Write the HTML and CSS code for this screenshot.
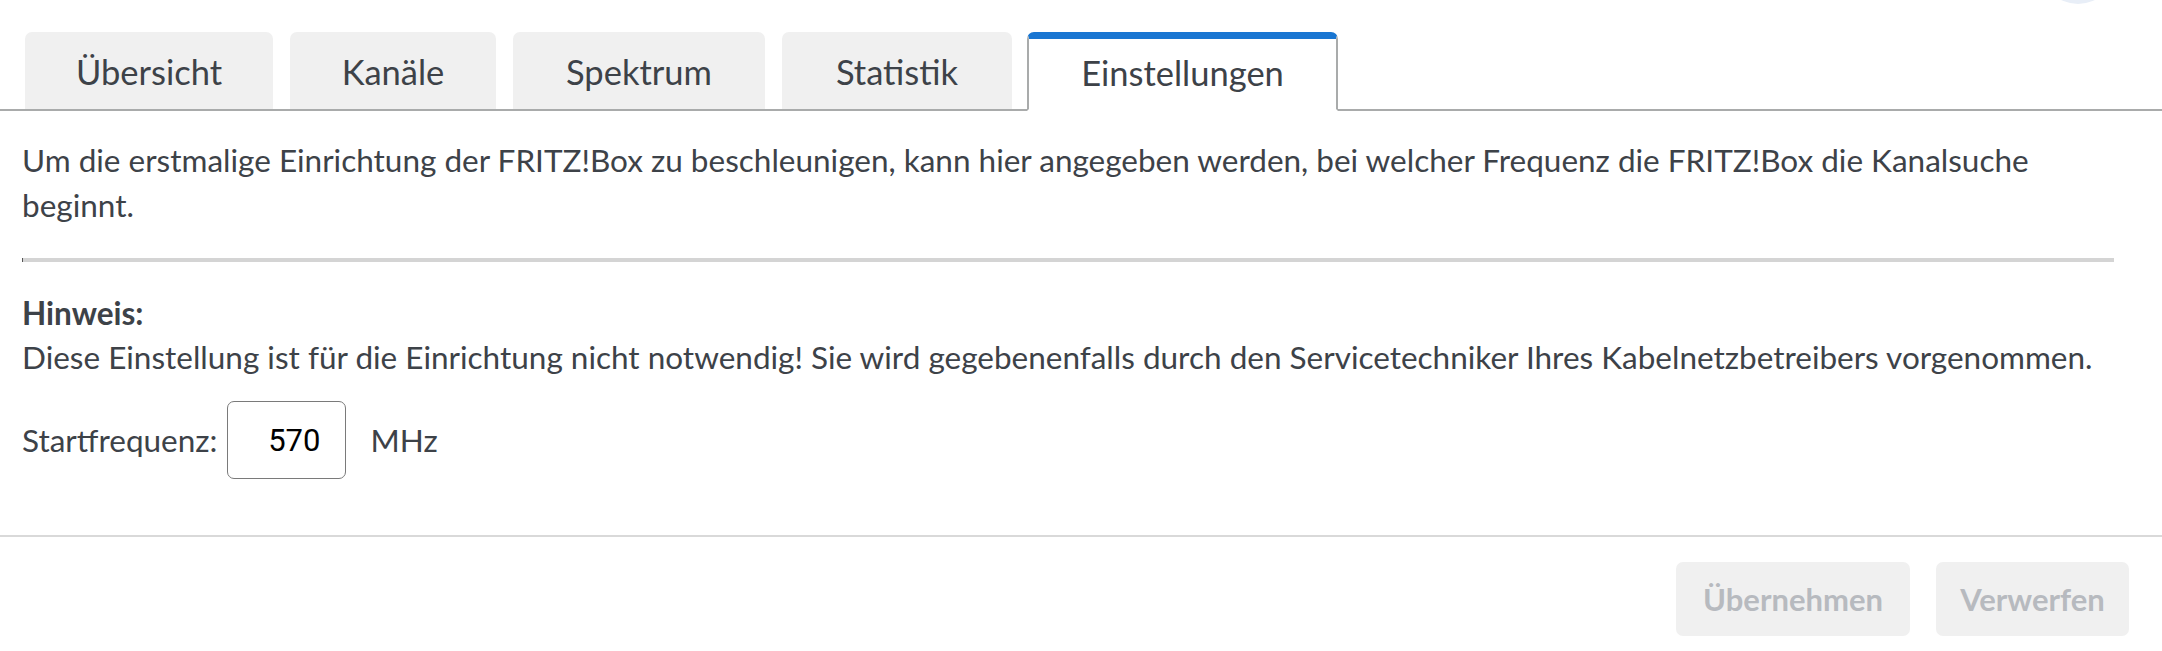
FILE: index.html
```html
<!DOCTYPE html>
<html lang="de">
<head>
<meta charset="utf-8">
<title>Kabel Einstellungen</title>
<link rel="stylesheet" href="styles.css">
</head>
<body>
<div class="page">
  <div class="avatar"></div>
  <nav class="tabs">
    <div class="tab tab-1">Übersicht</div>
    <div class="tab tab-2">Kanäle</div>
    <div class="tab tab-3">Spektrum</div>
    <div class="tab tab-4">Statistik</div>
    <div class="tab tab-5 active">Einstellungen</div>
  </nav>
  <main class="content">
    <p class="intro">Um die erstmalige Einrichtung der FRITZ!Box zu beschleunigen, kann hier angegeben werden, bei welcher Frequenz die FRITZ!Box die Kanalsuche beginnt.</p>
    <hr class="sep">
    <div class="hint">
      <div class="hint-title">Hinweis:</div>
      <div class="hint-text">Diese Einstellung ist für die Einrichtung nicht notwendig! Sie wird gegebenenfalls durch den Servicetechniker Ihres Kabelnetzbetreibers vorgenommen.</div>
    </div>
    <div class="freq-row">
      <label class="freq-label" for="freq">Startfrequenz:</label>
      <input class="freq-input" id="freq" type="text" value="570">
      <span class="unit">MHz</span>
    </div>
  </main>
  <footer class="actions">
    <button class="btn btn-apply" disabled>Übernehmen</button>
    <button class="btn btn-discard" disabled>Verwerfen</button>
  </footer>
</div>
</body>
</html>
```

FILE: styles.css
```css
html, body {
  margin: 0;
  padding: 0;
  background: #ffffff;
}
body {
  font-family: "Lato", "Noto Sans", sans-serif;
  color: #3d4248;
  width: 2162px;
  height: 651px;
  overflow: hidden;
}
.page {
  position: relative;
  padding-top: 30px;
}
.avatar {
  position: absolute;
  top: -72px;
  left: 2040px;
  width: 76px;
  height: 76px;
  border-radius: 50%;
  background: #e8eef7;
}
.tabs {
  display: flex;
  align-items: flex-end;
  gap: 17px;
  padding-left: 25px;
  border-bottom: 2px solid #a9abab;
  height: 79px;
}
.tab {
  box-sizing: border-box;
  height: 79px;
  padding: 2px 0 0;
  display: flex;
  align-items: center;
  justify-content: center;
  background: #f0f0f0;
  border-radius: 7px 7px 0 0;
  font-size: 34.5px;
  color: #3d4248;
  margin-bottom: -2px;
  border-bottom: 2px solid #a9abab;
}
.tab-1 { width: 248px; }
.tab-2 { width: 206px; }
.tab-3 { width: 252px; }
.tab-4 { width: 230px; }
.tab-5 { width: 311px; margin-left: -2px; }
.tab.active {
  background: #ffffff;
  border: 2px solid #a9abab;
  border-top: 7px solid #1976d2;
  border-bottom: 2px solid #ffffff;
  padding: 0 0 4px;
}
.content {
  padding: 0 40px 0 22px;
}
.intro {
  margin: 0;
  padding-top: 27px;
  font-size: 31.5px;
  line-height: 45px;
}
.sep {
  margin: 30px 8px 0 0;
  height: 4px;
  border: 0;
  border-left: 1px solid #555;
  background: #d4d4d4;
}
.hint {
  margin-top: 29px;
  font-size: 31.5px;
  line-height: 44px;
}
.hint-title {
  font-weight: 700;
}
.freq-row {
  display: flex;
  align-items: center;
  margin-top: 22px;
  font-size: 31.5px;
}
.freq-label {
  margin-right: 10px;
}
.freq-input {
  box-sizing: border-box;
  width: 119px;
  height: 78px;
  border: 1.5px solid #7a7a7a;
  border-radius: 7px;
  font-family: "Roboto", "Liberation Sans", sans-serif;
  font-size: 31px;
  color: #000;
  text-align: right;
  padding: 0 25px 0 10px;
  margin-right: 24px;
}
.actions {
  margin-top: 56px;
  border-top: 2px solid #d9d9d9;
  display: flex;
  justify-content: flex-end;
  gap: 26px;
  padding: 25px 33px 0 0;
}
.btn {
  box-sizing: border-box;
  height: 74px;
  padding: 0 20px;
  border: 0;
  border-radius: 7px;
  background: #f0f0f0;
  color: #b7babf;
  font-family: "Lato", "Noto Sans", sans-serif;
  font-weight: 700;
  font-size: 31px;
}
.btn-apply {
  width: 234px;
}
.btn-discard {
  width: 193px;
}
```
